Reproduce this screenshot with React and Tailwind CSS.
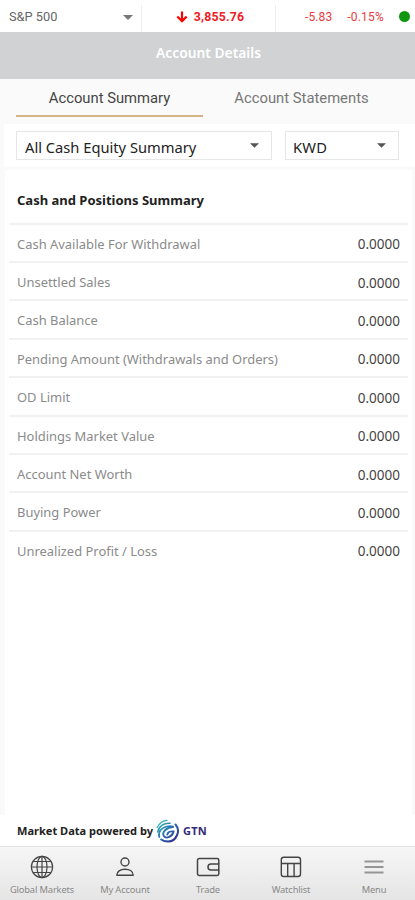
const rows = [
  'Cash Available For Withdrawal',
  'Unsettled Sales',
  'Cash Balance',
  'Pending Amount (Withdrawals and Orders)',
  'OD Limit',
  'Holdings Market Value',
  'Account Net Worth',
  'Buying Power',
  'Unrealized Profit / Loss',
];

function Caret({ className }) {
  return (
    <svg viewBox="0 0 10 5" className={className} fill="currentColor">
      <path d="M0 0H10L5 5Z" />
    </svg>
  );
}

function GlobeIcon() {
  return (
    <svg width="24" height="24" viewBox="0 0 24 24" fill="none" stroke="#444" strokeWidth="1.2">
      <circle cx="12" cy="12" r="10.6" />
      <ellipse cx="12" cy="12" rx="5" ry="10.6" />
      <path d="M12 1.4V22.6M1.4 12H22.6M3.2 6.5H20.8M3.2 17.5H20.8" />
    </svg>
  );
}

function UserIcon() {
  return (
    <svg width="24" height="24" viewBox="0 0 24 24" fill="none" stroke="#444" strokeWidth="1.4" strokeLinejoin="round">
      <circle cx="12" cy="7" r="4" />
      <path d="M3.8 20.3C3.8 16.5 7.2 14.2 12 14.2S20.2 16.5 20.2 20.3Z" />
    </svg>
  );
}

function WalletIcon() {
  return (
    <svg width="24" height="24" viewBox="0 0 24 24" fill="none" stroke="#444" strokeWidth="1.5" strokeLinejoin="round">
      <path d="M22.8 9V5.2a1.700 1.700 0 0 0-1.700-1.700H3.200A1.700 1.700 0 0 0 1.500 5.200V18.800a1.700 1.700 0 0 0 1.700 1.700H21.100a1.700 1.700 0 0 0 1.700-1.700V15" />
      <path d="M22.800 9H15a3 3 0 0 0 0 6H22.800Z" />
    </svg>
  );
}

function TableIcon() {
  return (
    <svg width="24" height="24" viewBox="0 0 24 24" fill="none" stroke="#444" strokeWidth="1.4">
      <rect x="2.3" y="2.3" width="19.2" height="19.2" rx="2.5" />
      <path d="M2.3 8.5H21.5M8.7 8.5V21.5M15.1 8.5V21.5" />
    </svg>
  );
}

function MenuIcon() {
  return (
    <svg width="24" height="24" viewBox="0 0 24 24" fill="none" stroke="#959595" strokeWidth="2">
      <path d="M2.5 6.5H21.5M2.5 12H21.5M2.5 17.5H21.5" />
    </svg>
  );
}

function GtnMark() {
  return (
    <svg width="24" height="24" viewBox="0 0 24 24" fill="none" strokeLinecap="round">
      <defs>
        <linearGradient id="gtn" x1="2" y1="2" x2="21" y2="21" gradientUnits="userSpaceOnUse">
          <stop offset="0" stopColor="#35c5b6" />
          <stop offset="0.5" stopColor="#2872b5" />
          <stop offset="1" stopColor="#32258b" />
        </linearGradient>
      </defs>
      <g stroke="url(#gtn)">
        <path d="M1.2 8.5C3.5 4 7 1.300 11 1.300" strokeWidth="1.3" />
        <path d="M1.8 13C3 7 8 3.8 14 4.3" strokeWidth="1.6" />
        <path d="M3.3 18C1.5 11 9 5.5 17 7.5" strokeWidth="1.8" />
        <path d="M17 8C11 8 5.5 13 7.8 17C10 20.5 16.5 17.5 17.5 12.5C14.5 12 11.8 13.2 11.3 15.5" strokeWidth="1.9" />
        <path d="M19.5 5.5C25 11.5 20.5 22.5 12 22.5C9 22.5 6.8 21.8 5.2 20.5" strokeWidth="2" />
      </g>
    </svg>
  );
}

const nav = [
  { label: 'Global Markets', Icon: GlobeIcon },
  { label: 'My Account', Icon: UserIcon },
  { label: 'Trade', Icon: WalletIcon },
  { label: 'Watchlist', Icon: TableIcon },
  { label: 'Menu', Icon: MenuIcon },
];

export default function App() {
  return (
    <div className="flex h-[900px] w-[415px] flex-col overflow-hidden whitespace-nowrap bg-[#fafafa] font-['Noto_Sans',sans-serif]">
      <div className="flex h-8 shrink-0 bg-white font-[Roboto,sans-serif] text-xs">
        <div className="flex w-[141px] items-center justify-between pl-[9px] pr-2 pt-px text-[#666]">
          <span className="text-[12.8px]">S&amp;P 500</span>
          <Caret className="mt-0.5 h-[5px] w-[10px] text-[#777]" />
        </div>
        <div className="mt-[5px] flex w-[135px] items-center justify-center gap-[6px] border-x border-[#eee] pb-[4px] pl-[3px] font-bold text-[#ee2028]">
          <svg width="12" height="12" viewBox="0 0 12 12" fill="none" stroke="#f00" strokeWidth="2.2">
            <path d="M6 0.5V10M1.3 5.5L6 10.2L10.7 5.5" />
          </svg>
          <span className="pt-px text-[12.3px] tracking-[0.2px]">3,855.76</span>
        </div>
        <div className="flex grow items-center justify-end pr-[5px] pt-px text-[#e83b40]">
          <span className="tracking-[0.1px]">-5.83</span>
          <span className="ml-[15px] tracking-[0.2px]">-0.15%</span>
          <span className="ml-[15px] size-[11px] rounded-full bg-[#109610]" />
        </div>
      </div>

      <div className="flex h-[47px] shrink-0 items-center justify-center bg-[#d0d2d3] pb-[4px] pl-[2px] text-[13.8px] font-semibold text-white">
        Account Details
      </div>

      <div className="flex h-[45px] shrink-0 px-4 font-[Roboto,sans-serif] text-[14.8px]">
        <div className="flex h-[38px] w-[187px] items-center justify-center border-b-2 border-[#d5b585] pt-0.5 text-[#444]">
          Account Summary
        </div>
        <div className="flex h-[38px] grow items-center justify-center pl-px text-[#777]">Account Statements</div>
      </div>

      <div className="ml-1 flex h-[43px] shrink-0 gap-[13px] bg-white pl-[12px] pr-4 pt-[7px] text-[14.7px] text-[#222]">
        <div className="flex h-[29px] w-[256px] items-center justify-between border border-[#e6e6e6] pl-2 pr-3">
          <span className="pt-[3px]">All Cash Equity Summary</span>
          <Caret className="h-[5px] w-[9px] text-[#555]" />
        </div>
        <div className="flex h-[29px] w-[114px] items-center justify-between border border-[#e6e6e6] pl-[7px] pr-3">
          <span className="pt-[3px] tracking-[0.2px]">KWD</span>
          <Caret className="h-[5px] w-[9px] text-[#555]" />
        </div>
      </div>

      <div className="ml-[5px] mr-[3px] mt-[3px] flex grow flex-col bg-white px-1">
        <h2 className="flex h-[52.6px] items-center pl-2 pt-[9px] text-[13px] font-bold text-[#222]">
          Cash and Positions Summary
        </h2>
        {rows.map((label) => (
          <div key={label} className="flex h-[38.4px] items-center justify-between border-t-2 border-[#f1f1f1] pl-2 pr-2 pt-[3px] text-[13px]">
            <span className="text-[12.95px] text-[#8b8b8b]">{label}</span>
            <span className="text-[13.5px] text-[#444]">0.0000</span>
          </div>
        ))}
      </div>

      <div className="flex h-[31px] shrink-0 items-center bg-white pl-[17px] text-[11.05px] font-bold text-[#222]">
        <span className="pt-0.5">Market Data powered by</span>
        <span className="ml-[3px]">
          <GtnMark />
        </span>
        <span className="ml-[3px] pt-px text-[11px] tracking-[0.2px] text-[#352a78]">GTN</span>
      </div>

      <div className="grid h-[54px] shrink-0 grid-cols-5 border-t border-[#e5e5e5] bg-linear-to-b from-[#f6f6f6] to-[#e5e5e5]">
        {nav.map(({ label, Icon }) => (
          <div key={label} className="flex flex-col items-center gap-[3px] pl-px pt-[8px] text-[#888]">
            <Icon />
            <span className="text-[9.3px] leading-[16px] tracking-[-0.13px]">{label}</span>
          </div>
        ))}
      </div>
    </div>
  );
}
